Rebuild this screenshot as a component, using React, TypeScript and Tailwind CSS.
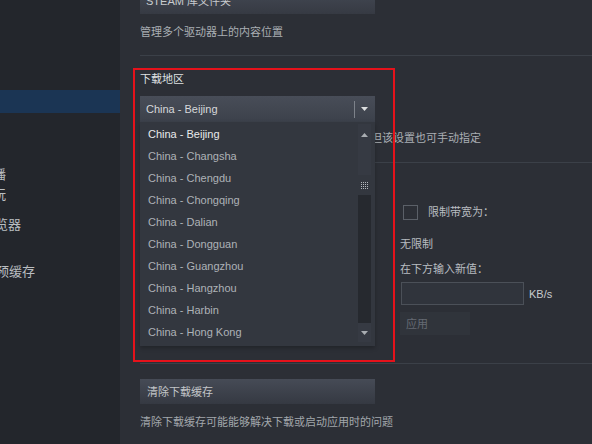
import React from 'react';

const regions = [
    'China - Beijing',
    'China - Changsha',
    'China - Chengdu',
    'China - Chongqing',
    'China - Dalian',
    'China - Dongguan',
    'China - Guangzhou',
    'China - Hangzhou',
    'China - Harbin',
    'China - Hong Kong',
];

function Caret({ up = false, color = '#dcdedf' }: { up?: boolean; color?: string }) {
    return (
        <svg width="7" height="4" viewBox="0 0 7 4" className="block">
            <path d={up ? 'M0 4h7L3.5 0z' : 'M0 0h7L3.5 4z'} fill={color} />
        </svg>
    );
}

function Grip() {
    const dots = [0, 2, 4, 6];
    return (
        <svg width="7" height="7" viewBox="0 0 7 7" className="block">
            {dots.map((y) => dots.map((x) => <rect key={`${x}-${y}`} x={x} y={y} width="1" height="1" fill="#b4b8bd" />))}
        </svg>
    );
}

function Sidebar() {
    // labels run off the left edge, only their tails show
    return (
        <aside className="w-[120px] shrink-0 bg-[#23262c] overflow-hidden text-[13px] leading-[16px] text-[#b9bdc1] whitespace-nowrap">
            <div className="h-[90px]" />
            <div className="h-[23px] bg-[#1b3554]" />
            <div className="mt-[54px] ml-[-20px]">直播</div>
            <div className="mt-[4px] ml-[-46px]">远程畅玩</div>
            <div className="mt-[14px] ml-[-44px]">网页浏览器</div>
            <div className="mt-[31px] ml-[-43px]">着色器预缓存</div>
        </aside>
    );
}

function RegionSelect() {
    return (
        <div className="relative mt-[9px] w-[235px]">
            <div className="h-[26px] flex items-center bg-linear-to-b from-[#484d58] to-[#3c414b] text-[#d6d8db]">
                <span className="flex-1 pl-[6px]">China - Beijing</span>
                <span className="w-px h-[17px] bg-[#7d828a]" />
                <span className="ml-[6px] mr-[7px]">
                    <Caret />
                </span>
            </div>

            {/* open list */}
            <div className="absolute left-0 top-[26px] w-[235px] h-[224px] z-10 flex bg-[#33373f] shadow-[0_2px_4px_rgba(0,0,0,0.25)]">
                <ul className="flex-1 pt-[1px]">
                    {regions.map((r, i) => (
                        <li
                            key={r}
                            className={`h-[22px] flex items-center pl-[8px] ${i === 0 ? 'text-[#e8eaec]' : 'text-[#aeb2b7]'}`}
                        >
                            {r}
                        </li>
                    ))}
                </ul>
                <div className="w-[13px] mt-[2px] mb-[4px] mr-[4px] flex flex-col">
                    <div className="h-[51px] bg-[#363a43] flex justify-center pt-[9px]">
                        <Caret up color="#a9adb2" />
                    </div>
                    <div className="h-[20px] flex items-center justify-center">
                        <Grip />
                    </div>
                    <div className="flex-1 bg-[#26292f]" />
                    <div className="h-[19px] bg-[#363a43] flex items-center justify-center">
                        <Caret color="#a9adb2" />
                    </div>
                </div>
            </div>
        </div>
    );
}

export default function App() {
    return (
        <div className="relative w-[592px] h-[444px] overflow-hidden flex text-[11px] leading-[16px] [font-family:'Liberation_Sans','Noto_Sans_CJK_SC',sans-serif]">
            <Sidebar />

            <main className="flex-1 bg-[#2c2f36] pl-[20px] overflow-hidden whitespace-nowrap">
                {/* library folders */}
                <div className="mt-[-12px] w-[235px] h-[26px] flex items-center pl-[6px] bg-linear-to-b from-[#454a55] to-[#363a43] text-[#c8cbce]">
                    STEAM 库文件夹
                </div>
                <p className="mt-[10px] text-[#a9aeb3]">管理多个驱动器上的内容位置</p>
                <div className="mt-[15px] h-px bg-[#3b4048]" />

                {/* download region */}
                <h3 className="mt-[15px] text-[#dfe1e3]">下载地区</h3>
                <RegionSelect />
                <p className="mt-[8px] text-[#a9aeb3]">系统会根据您的网络位置自动选择最近服务器，但该设置也可手动指定</p>
                <div className="mt-[16px] h-px bg-[#3b4048]" />

                {/* bandwidth */}
                <div className="pl-[260px] text-[#b9bdc1]">
                    <label className="mt-[41px] flex items-center gap-[10px] ml-[3px]">
                        <span className="w-[15px] h-[15px] border border-[#5b6068]" />
                        <span>限制带宽为：</span>
                    </label>
                    <p className="mt-[16px]">无限制</p>
                    <p className="mt-[9px]">在下方输入新值：</p>
                    <div className="mt-[5px] flex items-center gap-[5px]">
                        <div className="ml-[1px] w-[123px] h-[23px] border border-[#4b5058] bg-[#30343c]" />
                        <span className="text-[#c8cbce]">KB/s</span>
                    </div>
                    <button className="mt-[7px] w-[70px] h-[23px] flex items-center pl-[6px] bg-[#30343b] text-[#656a73]">
                        应用
                    </button>
                </div>
                <div className="mt-[28px] h-px bg-[#3b4048]" />

                {/* download cache */}
                <div className="mt-[15px] w-[235px] h-[25px] flex items-center pl-[7px] bg-linear-to-b from-[#464b56] to-[#353942] text-[#c3c6c9]">
                    清除下载缓存
                </div>
                <p className="mt-[10px] text-[#a2a7ac]">清除下载缓存可能能够解决下载或启动应用时的问题</p>
            </main>

            {/* annotation box */}
            <div className="absolute left-[133px] top-[68px] w-[262px] h-[294px] border-2 border-[#e5121b] pointer-events-none z-20" />
        </div>
    );
}
